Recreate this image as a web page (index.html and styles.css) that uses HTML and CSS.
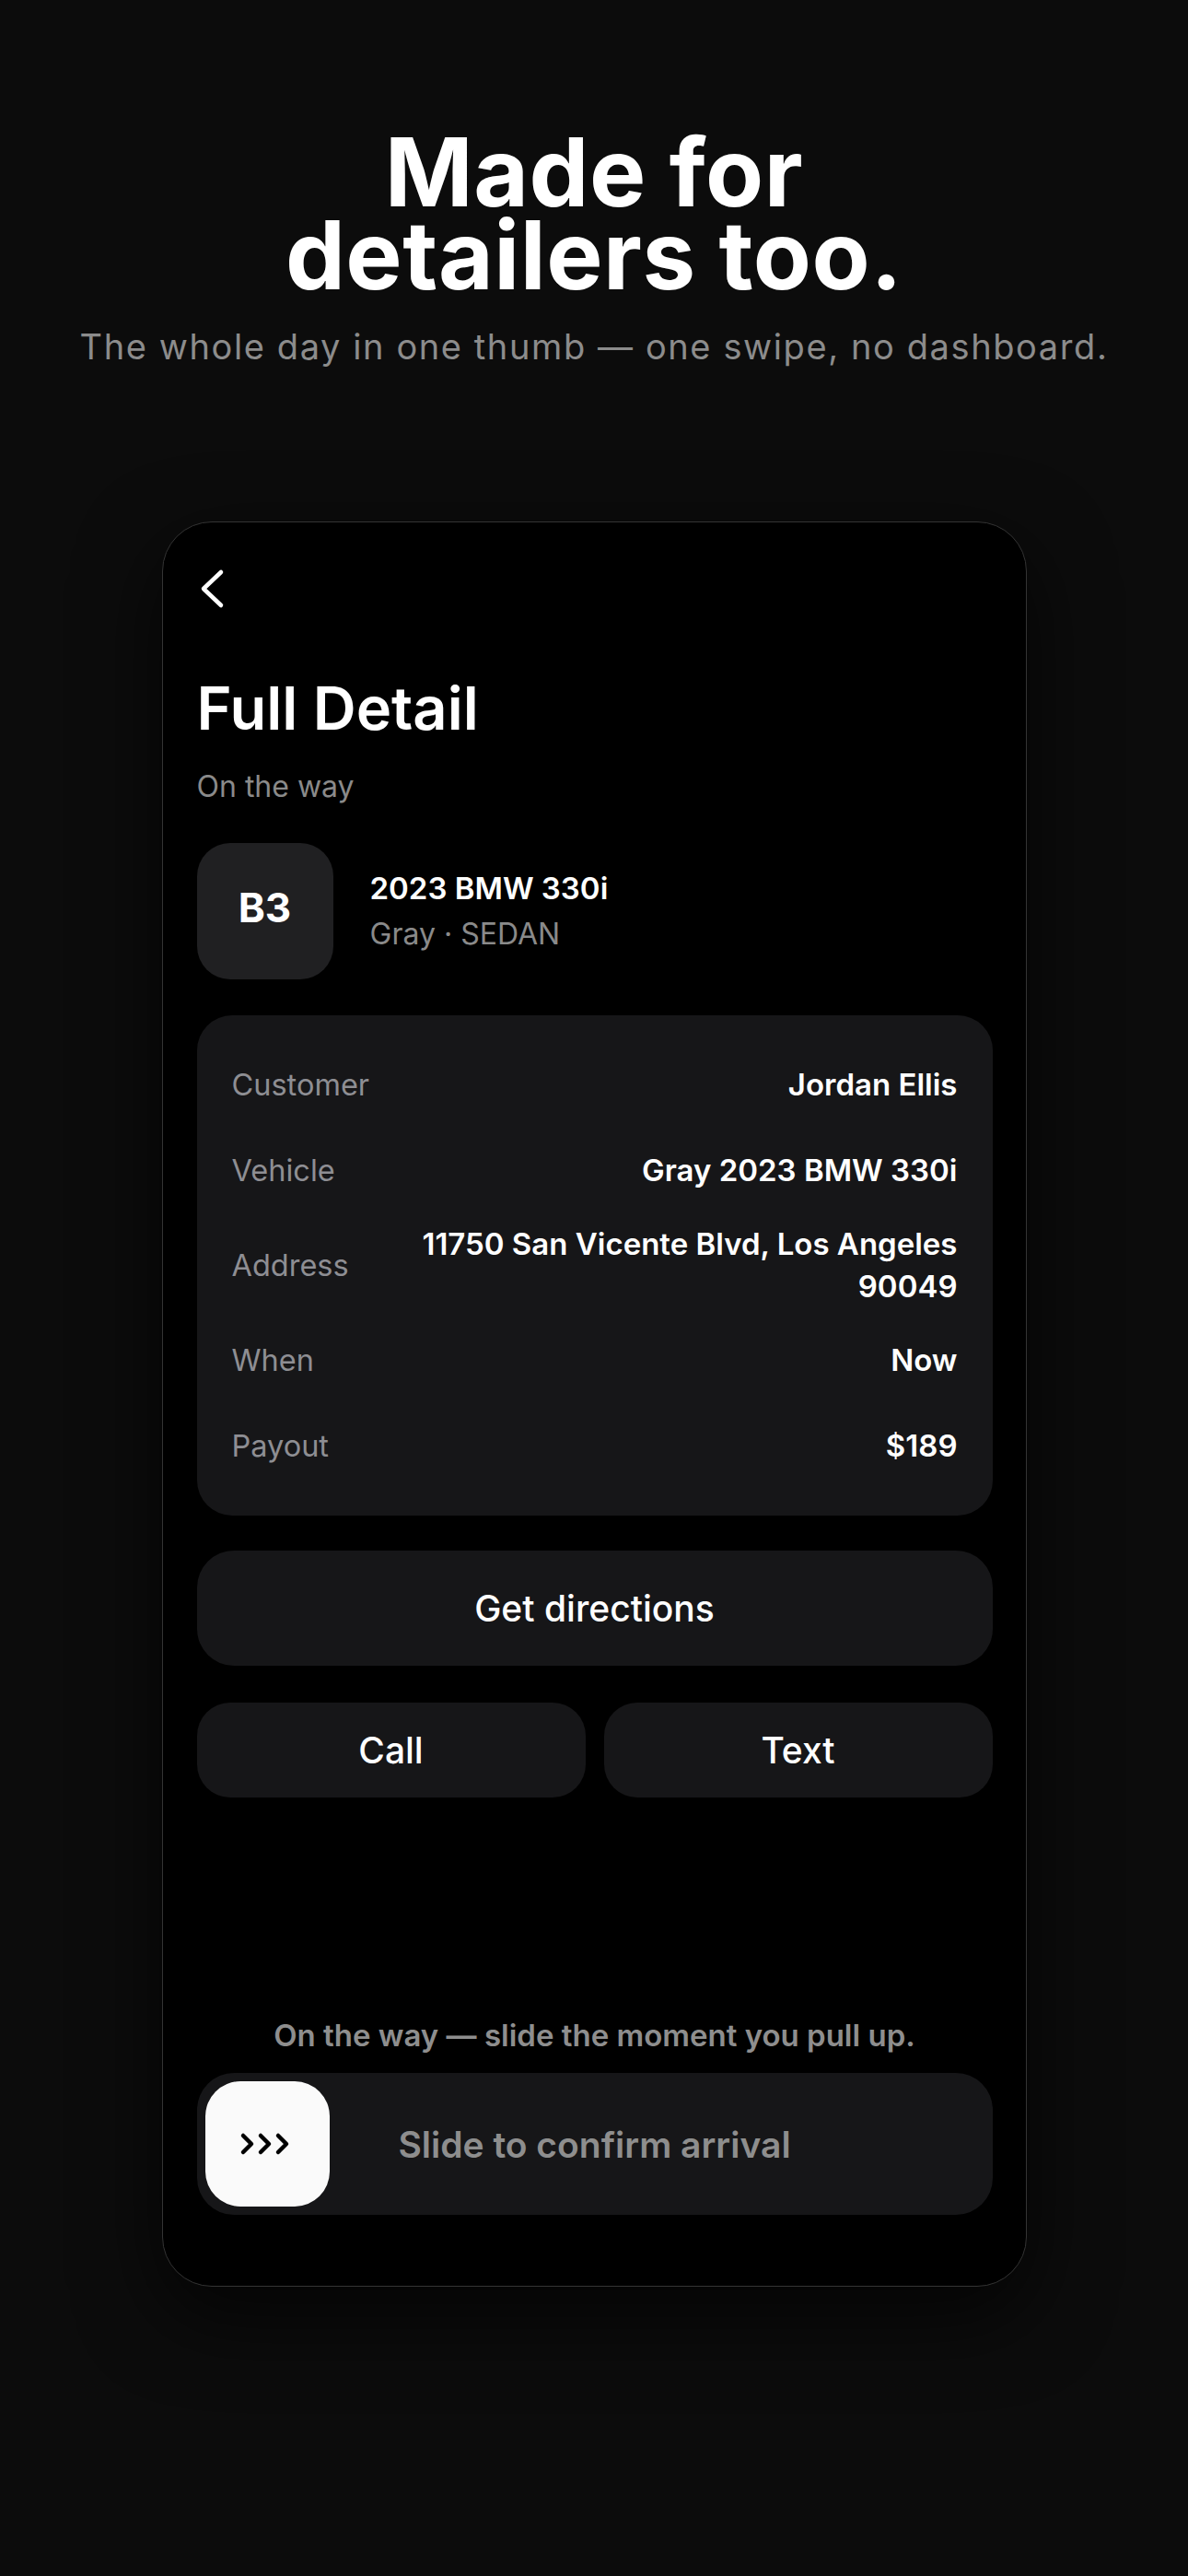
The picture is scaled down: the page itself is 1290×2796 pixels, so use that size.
FILE: index.html
```html
<!DOCTYPE html>
<html lang="en">
<head>
    <meta charset="UTF-8">
    <meta name="viewport" content="width=device-width, initial-scale=1.0">
    <title>Made for detailers too</title>
    <link rel="stylesheet" href="styles.css">
</head>
<body>
    <header class="hero">
        <h1 class="hero-title">Made for<br>detailers too.</h1>
        <p class="hero-sub">The whole day in one thumb — one swipe, no dashboard.</p>
    </header>

    <div class="phone">
        <button class="back" aria-label="Back">
            <svg width="30" height="46" viewBox="0 0 30 46">
                <path d="M25 5 L6 23 L25 41" fill="none" stroke="#fff" stroke-width="4.5" stroke-linecap="round" stroke-linejoin="round"/>
            </svg>
        </button>

        <h2 class="job-title">Full Detail</h2>
        <div class="job-status">On the way</div>

        <div class="vehicle">
            <div class="vehicle-tile">B3</div>
            <div class="vehicle-info">
                <div class="vehicle-name">2023 BMW 330i</div>
                <div class="vehicle-sub">Gray · SEDAN</div>
            </div>
        </div>

        <div class="details">
            <div class="row">
                <span class="label">Customer</span>
                <span class="value">Jordan Ellis</span>
            </div>
            <div class="row">
                <span class="label">Vehicle</span>
                <span class="value">Gray 2023 BMW 330i</span>
            </div>
            <div class="row">
                <span class="label">Address</span>
                <span class="value">11750 San Vicente Blvd, Los Angeles 90049</span>
            </div>
            <div class="row">
                <span class="label">When</span>
                <span class="value">Now</span>
            </div>
            <div class="row">
                <span class="label">Payout</span>
                <span class="value">$189</span>
            </div>
        </div>

        <button class="btn btn-wide">Get directions</button>
        <div class="btn-row">
            <button class="btn btn-half">Call</button>
            <button class="btn btn-half">Text</button>
        </div>

        <div class="arrival">
            <p class="arrival-hint">On the way — slide the moment you pull up.</p>
            <div class="slider">
                <div class="knob">
                    <svg width="62" height="26" viewBox="0 0 62 26">
                        <path d="M5 4 L14 13 L5 22 M24 4 L33 13 L24 22 M43 4 L52 13 L43 22" fill="none" stroke="#000" stroke-width="4.5" stroke-linecap="round" stroke-linejoin="round"/>
                    </svg>
                </div>
                <span class="slider-text">Slide to confirm arrival</span>
            </div>
        </div>
    </div>
</body>
</html>
```

FILE: styles.css
```css
body {
    margin: 0;
    background: #0c0c0c;
    font-family: Inter, "Noto Sans", sans-serif;
    color: #fff;
    min-height: 2796px;
}
button {
    font-family: inherit;
    border: none;
    cursor: pointer;
}
.hero {
    text-align: center;
    padding-top: 142px;
}
.hero-title {
    margin: 0;
    font-size: 103px;
    line-height: 90px;
    font-weight: 700;
    letter-spacing: 0.005em;
}
.hero-sub {
    margin: 30px 0 0;
    font-size: 38px;
    line-height: 48px;
    color: #8c8c8c;
    letter-spacing: 0.042em;
}
.phone {
    width: 864px;
    height: 1865px;
    margin: 166px auto 0;
    padding: 49px 36px 0 37px;
    background: #000;
    border: 1px solid #343434;
    border-radius: 54px;
    box-shadow: 0 30px 90px rgba(0, 0, 0, 0.7);
    display: flex;
    flex-direction: column;
}
.back {
    background: none;
    padding: 0;
    width: 30px;
    height: 46px;
    margin-left: 1px;
}
.back svg {
    display: block;
}
.job-title {
    margin: 69px 0 0;
    font-size: 65px;
    line-height: 76px;
    font-weight: 600;
}
.job-status {
    margin-top: 27px;
    font-size: 32px;
    line-height: 40px;
    color: #8a8a8a;
}
.vehicle {
    display: flex;
    align-items: center;
    gap: 40px;
    margin-top: 41px;
}
.vehicle-tile {
    width: 148px;
    height: 140px;
    padding-bottom: 8px;
    border-radius: 36px;
    background: #202022;
    display: flex;
    align-items: center;
    justify-content: center;
    font-size: 44px;
    font-weight: 700;
}
.vehicle-name {
    font-size: 33px;
    line-height: 44px;
    font-weight: 600;
}
.vehicle-sub {
    margin-top: 6px;
    font-size: 32px;
    line-height: 44px;
    color: #8a8a8a;
}
.details {
    margin-top: 39px;
    background: #161618;
    border-radius: 38px;
    padding: 39px 38px 40px 38px;
    display: flex;
    flex-direction: column;
    gap: 21px;
}
.row {
    display: flex;
    align-items: center;
    justify-content: space-between;
    gap: 40px;
    min-height: 72px;
}
.label {
    font-size: 32.5px;
    color: #8e8e93;
    flex-shrink: 0;
}
.value {
    font-size: 33px;
    line-height: 46px;
    font-weight: 600;
    text-align: right;
}
.btn {
    background: #161618;
    color: #fff;
    font-size: 39px;
    font-weight: 500;
    border-radius: 40px;
}
.btn-wide {
    margin-top: 38px;
    height: 125px;
    width: 100%;
}
.btn-row {
    display: flex;
    gap: 20px;
    margin-top: 40px;
}
.btn-half {
    flex: 1;
    height: 103px;
    border-radius: 36px;
}
.arrival {
    margin-top: auto;
    padding-bottom: 77px;
}
.arrival-hint {
    margin: 0 0 21px;
    text-align: center;
    font-size: 33px;
    line-height: 40px;
    font-weight: 600;
    color: #8e8e8e;
}
.slider {
    position: relative;
    height: 154px;
    border-radius: 40px;
    background: #161618;
    display: flex;
    align-items: center;
    justify-content: center;
}
.knob {
    position: absolute;
    left: 9px;
    top: 9px;
    width: 135px;
    height: 136px;
    border-radius: 38px;
    background: #fafafa;
    display: flex;
    align-items: center;
    justify-content: center;
}
.knob svg {
    display: block;
}
.slider-text {
    font-size: 39px;
    font-weight: 600;
    color: #8e8e8e;
}
```
